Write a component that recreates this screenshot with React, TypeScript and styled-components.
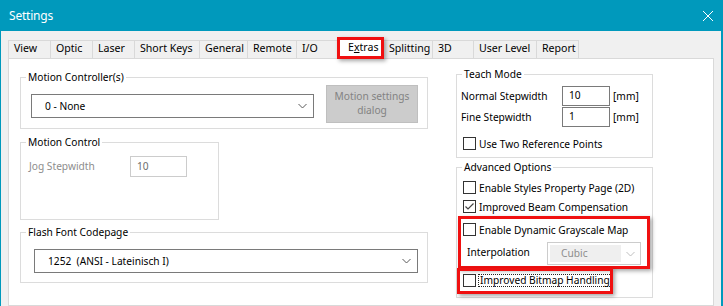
import React from 'react'
import styled, { createGlobalStyle } from 'styled-components'

const accent = '#0099bc'
const red = '#f01010'

const GlobalStyle = createGlobalStyle`
  html, body { margin: 0; padding: 0; background: #ffffff; }
  body {
    font-family: "Noto Sans", "Segoe UI", sans-serif;
    font-size: 10.2px;
    color: #000000;
  }
  * { box-sizing: border-box; }
`

const Window = styled.div`
  width: 723px;
  height: 306px;
  border-left: 1px solid ${accent};
  border-right: 2px solid ${accent};
  background: #f0f0f0;
  display: flex;
  flex-direction: column;
  overflow: hidden;
`

const TitleBar = styled.div`
  flex: none;
  height: 31px;
  background: ${accent};
  color: #ffffff;
  font-size: 12px;
  letter-spacing: -0.2px;
  display: flex;
  align-items: center;
  justify-content: space-between;
  padding: 0 8px 0 8px;
`

const Body = styled.div`
  flex: 1;
  display: flex;
  flex-direction: column;
  padding: 6px 7px 0 7px;
`

const TabStrip = styled.div`
  flex: none;
  height: 21px;
  display: flex;
  align-items: flex-end;
`

const Tab = styled.div<{ $w: number; $active?: boolean }>`
  position: relative;
  z-index: ${p => (p.$active ? 2 : 1)};
  width: ${p => p.$w}px;
  height: ${p => (p.$active ? 22 : 18)}px;
  margin-left: -1px;
  margin-bottom: ${p => (p.$active ? -1 : 0)}px;
  padding: ${p => (p.$active ? '2px 0 0 9px' : '0 0 0 5px')};
  border: 1px solid #d9d9d9;
  border-bottom: none;
  background: ${p => (p.$active ? '#ffffff' : '#f0f0f0')};
  font-size: 10.6px;
  line-height: 15px;
  white-space: nowrap;
  &:first-child { margin-left: 0; }
`

const Highlight = styled.div<{ $x: number; $y: number; $w: number; $h: number }>`
  position: absolute;
  left: ${p => p.$x}px;
  top: ${p => p.$y}px;
  width: ${p => p.$w}px;
  height: ${p => p.$h}px;
  border: 3px solid ${red};
  box-shadow: 2px 2px 4px rgba(0, 0, 0, 0.35);
  pointer-events: none;
  z-index: 5;
`

const Panel = styled.div`
  flex: 1;
  background: #ffffff;
  border: 1px solid #d9d9d9;
  display: flex;
  align-items: flex-start;
  padding-left: 11px;
`

const Column = styled.div<{ $w: number; $ml?: number }>`
  width: ${p => p.$w}px;
  margin-left: ${p => p.$ml ?? 0}px;
  display: flex;
  flex-direction: column;
`

const Group = styled.div<{ $w?: number; $h: number; $mt: number }>`
  position: relative;
  width: ${p => (p.$w ? `${p.$w}px` : '100%')};
  height: ${p => p.$h}px;
  margin-top: ${p => p.$mt}px;
  border: 1px solid #dcdcdc;
`

const Caption = styled.span`
  position: absolute;
  top: -8px;
  left: 5px;
  padding: 0 2px;
  background: #ffffff;
  line-height: 14px;
  white-space: nowrap;
`

const ControllerRow = styled.div`
  display: flex;
  align-items: flex-start;
  gap: 12px;
  padding: 7px 0 0 10px;
`

const Combo = styled.div<{ $w: number }>`
  width: ${p => p.$w}px;
  height: 24px;
  margin-top: ${p => (p.$w < 300 ? 9 : 0)}px;
  border: 1px solid #7a7a7a;
  background: #ffffff;
  display: flex;
  align-items: center;
  justify-content: space-between;
  padding: 0 6px 1px 13px;
  white-space: pre;
`

const DisabledButton = styled.div`
  width: 92px;
  height: 38px;
  background: #cccccc;
  border: 1px solid #bfbfbf;
  color: #838383;
  line-height: 14px;
  text-align: center;
  display: flex;
  align-items: center;
  justify-content: center;
  padding-bottom: 2px;
`

const JogRow = styled.div`
  display: flex;
  align-items: center;
  padding: 13px 0 0 8px;
`

const DimLabel = styled.span`
  width: 101px;
  color: #8d8d8d;
  padding-bottom: 1px;
`

const JogInput = styled.div`
  width: 57px;
  height: 21px;
  border: 1px solid #cccccc;
  color: #6d6d6d;
  padding-left: 6px;
  line-height: 18px;
`

const CodepageRow = styled.div`
  padding: 16px 0 0 13px;
`

const TeachBody = styled.div`
  padding: 11px 0 0 4px;
`

const FieldRow = styled.div`
  display: flex;
  align-items: center;
  height: 20px;
  & + & { margin-top: 1px; }
`

const FieldLabel = styled.span`
  width: 101px;
  padding-bottom: 1px;
`

const TextInput = styled.div`
  width: 48px;
  height: 20px;
  border: 1px solid #7a7a7a;
  padding-left: 6px;
  line-height: 17px;
`

const Unit = styled.span`
  margin-left: 3px;
  padding-bottom: 1px;
`

const OptionsBody = styled.div`
  padding: 10px 0 0 6px;
`

const CheckRow = styled.div<{ $mt?: number; $ml?: number }>`
  display: flex;
  align-items: center;
  gap: 3px;
  height: 19px;
  margin-top: ${p => p.$mt ?? 0}px;
  margin-left: ${p => p.$ml ?? 0}px;
  white-space: nowrap;
`

const Box = styled.span`
  flex: none;
  width: 13px;
  height: 13px;
  border: 1px solid #333333;
  background: #ffffff;
  display: flex;
`

const FocusLabel = styled.span`
  height: 13px;
  margin-left: -1px;
  padding: 0 1px;
  border: 1px dotted #222222;
  line-height: 10px;
`

const InterpRow = styled.div`
  display: flex;
  align-items: center;
  height: 23px;
  margin-top: 3px;
  padding-left: 4px;
`

const InterpLabel = styled.span`
  width: 80px;
  padding-bottom: 3px;
`

const DisabledCombo = styled.div`
  width: 94px;
  height: 23px;
  border: 1px solid #cccccc;
  background: #ffffff;
  padding: 2px 0 2px 2px;
  display: flex;
`

const DisabledField = styled.div`
  flex: 1;
  background: #efefef;
  color: #8d8d8d;
  padding-left: 11px;
  line-height: 16px;
`

const ChevronCell = styled.div`
  width: 19px;
  display: flex;
  align-items: center;
  justify-content: center;
`

const Chevron = ({ color = '#5a5a5a' }: { color?: string }) => (
  <svg width="9" height="6" viewBox="0 0 9 6">
    <path d="M0.5 1 L4.5 5 L8.5 1" fill="none" stroke={color} strokeWidth="1" />
  </svg>
)

const Check = ({ checked }: { checked?: boolean }) => (
  <Box>
    {checked && (
      <svg width="11" height="11" viewBox="0 0 11 11">
        <path d="M1.5 5.5 L4 8 L9.5 2.5" fill="none" stroke="#444444" strokeWidth="1.2" />
      </svg>
    )}
  </Box>
)

const tabs = [
  { label: 'View', w: 43 },
  { label: 'Optic', w: 43 },
  { label: 'Laser', w: 43 },
  { label: 'Short Keys', w: 66 },
  { label: 'General', w: 49 },
  { label: 'Remote', w: 50 },
  { label: 'I/O', w: 43 },
  { label: 'Extras', w: 46, active: true },
  { label: 'Splitting', w: 50 },
  { label: '3D', w: 42 },
  { label: 'User Level', w: 64 },
  { label: 'Report', w: 43 },
]

export default function App() {
  return (
    <>
      <GlobalStyle />
      <Window>
        <TitleBar>
          <span>Settings</span>
          <svg width="10" height="10" viewBox="0 0 10 10">
            <path d="M0 0 L10 10 M10 0 L0 10" stroke="#ffffff" strokeWidth="1" />
          </svg>
        </TitleBar>
        <Body>
          <TabStrip>
            {tabs.map(t => (
              <Tab key={t.label} $w={t.w} $active={t.active}>
                {t.active ? (
                  <>
                    E<u>x</u>tras
                    <Highlight $x={-2} $y={-1} $w={47} $h={22} />
                  </>
                ) : (
                  t.label
                )}
              </Tab>
            ))}
          </TabStrip>
          <Panel>
            <Column $w={408}>
              <Group $h={52} $mt={18}>
                <Caption>Motion Controller(s)</Caption>
                <ControllerRow>
                  <Combo $w={283}>
                    <span>0 - None</span>
                    <Chevron />
                  </Combo>
                  <DisabledButton>
                    Motion settings
                    <br />
                    dialog
                  </DisabledButton>
                </ControllerRow>
              </Group>
              <Group $w={199} $h={78} $mt={13}>
                <Caption>Motion Control</Caption>
                <JogRow>
                  <DimLabel>Jog Stepwidth</DimLabel>
                  <JogInput>10</JogInput>
                </JogRow>
              </Group>
              <Group $h={51} $mt={12}>
                <Caption>Flash Font Codepage</Caption>
                <CodepageRow>
                  <Combo $w={384}>
                    <span>1252  (ANSI - Lateinisch I)</span>
                    <Chevron />
                  </Combo>
                </CodepageRow>
              </Group>
            </Column>
            <Column $w={197} $ml={28}>
              <Group $h={84} $mt={15}>
                <Caption>Teach Mode</Caption>
                <TeachBody>
                  <FieldRow>
                    <FieldLabel>Normal Stepwidth</FieldLabel>
                    <TextInput>10</TextInput>
                    <Unit>[mm]</Unit>
                  </FieldRow>
                  <FieldRow>
                    <FieldLabel>Fine Stepwidth</FieldLabel>
                    <TextInput>1</TextInput>
                    <Unit>[mm]</Unit>
                  </FieldRow>
                  <CheckRow $mt={7} $ml={2}>
                    <Check />
                    <span>Use Two Reference Points</span>
                  </CheckRow>
                </TeachBody>
              </Group>
              <Group $h={131} $mt={9}>
                <Caption>Advanced Options</Caption>
                <OptionsBody>
                  <CheckRow>
                    <Check />
                    <span>Enable Styles Property Page (2D)</span>
                  </CheckRow>
                  <CheckRow>
                    <Check checked />
                    <span>Improved Beam Compensation</span>
                  </CheckRow>
                  <CheckRow $mt={4}>
                    <Check />
                    <span>Enable Dynamic Grayscale Map</span>
                  </CheckRow>
                  <InterpRow>
                    <InterpLabel>Interpolation</InterpLabel>
                    <DisabledCombo>
                      <DisabledField>Cubic</DisabledField>
                      <ChevronCell>
                        <Chevron color="#bfbfbf" />
                      </ChevronCell>
                    </DisabledCombo>
                  </InterpRow>
                  <CheckRow $mt={6}>
                    <Check />
                    <FocusLabel>Improved Bitmap Handling</FocusLabel>
                  </CheckRow>
                </OptionsBody>
                <Highlight $x={1} $y={48} $w={192} $h={53} />
                <Highlight $x={0} $y={100} $w={156} $h={26} />
              </Group>
            </Column>
          </Panel>
        </Body>
      </Window>
    </>
  )
}
